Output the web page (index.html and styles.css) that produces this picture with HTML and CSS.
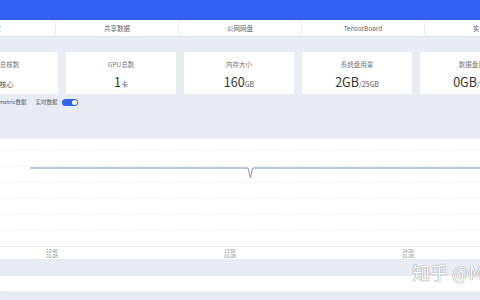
FILE: index.html
```html
<!DOCTYPE html>
<html lang="zh-CN">
<head>
  <meta charset="UTF-8">
  <title>监控</title>
  <link rel="stylesheet" href="styles.css">
</head>
<body>
  <div class="topbar"></div>
  <div class="tabs">
    <div class="tab">监控</div>
    <div class="tab">共享数据</div>
    <div class="tab">公网网盘</div>
    <div class="tab">TensorBoard</div>
    <div class="tab">实例日志</div>
  </div>
  <div class="main">
    <div class="cards">
      <div class="card">
        <div class="card__label">CPU总核数</div>
        <div class="card__value">4<small>核心</small></div>
      </div>
      <div class="card">
        <div class="card__label">GPU总数</div>
        <div class="card__value">1<small>卡</small></div>
      </div>
      <div class="card">
        <div class="card__label">内存大小</div>
        <div class="card__value">160<small>GB</small></div>
      </div>
      <div class="card">
        <div class="card__label">系统盘用量</div>
        <div class="card__value">2GB<small>/25GB</small></div>
      </div>
      <div class="card">
        <div class="card__label">数据盘用量</div>
        <div class="card__value">0GB<small>/50GB</small></div>
      </div>
    </div>
    <div class="switches">
      <span class="switches__item">显示metric数据</span>
      <span class="switches__item">实时数据</span>
      <span class="toggle"></span>
    </div>
    <div class="chart">
      <svg width="480" height="120" viewBox="0 0 480 120">
        <g stroke="#e4e6ea" stroke-width="1" stroke-dasharray="1 1.5">
          <line x1="0" y1="11.5" x2="480" y2="11.5" />
          <line x1="0" y1="27.5" x2="480" y2="27.5" />
          <line x1="0" y1="43.5" x2="480" y2="43.5" />
          <line x1="0" y1="59.5" x2="480" y2="59.5" />
          <line x1="0" y1="75.5" x2="480" y2="75.5" />
          <line x1="0" y1="91.5" x2="480" y2="91.5" />
        </g>
        <line x1="0" y1="107.5" x2="480" y2="107.5" stroke="#eceef2" />
        <polyline points="30,29 248,29 250.5,39 252.5,29 480,29" fill="none" stroke="#7f93c4" stroke-width="1" />
        <g class="chart__tick">
          <text x="52" y="114">13:40</text>
          <text x="52" y="119">01-08</text>
          <text x="230" y="114">13:50</text>
          <text x="230" y="119">01-08</text>
          <text x="408" y="114">14:00</text>
          <text x="408" y="119">01-08</text>
        </g>
      </svg>
    </div>
    <div class="band"></div>
    <div class="strip"></div>
  </div>
  <div class="watermark">知乎 @MLOps</div>
</body>
</html>
```

FILE: styles.css
```css
html, body {
  margin: 0;
  padding: 0;
  overflow: hidden;
}

body {
  width: 480px;
  height: 300px;
  background: #e9ebf5;
  font-family: "Noto Sans CJK SC", "Noto Sans", sans-serif;
  color: #444;
  position: relative;
}

.topbar {
  height: 20px;
  background: #3160f2;
}

.tabs {
  display: flex;
  height: 16px;
  margin-left: -67px;
  background: #fff;
  border-bottom: 1px solid #e3e5ea;
}

.tab {
  flex: 0 0 123px;
  border-right: 1px solid #eceef1;
  box-sizing: border-box;
  font-size: 6.5px;
  line-height: 16px;
  text-align: center;
  color: #666;
}

.main {
  display: flex;
  flex-direction: column;
}

.cards {
  display: flex;
  gap: 8px;
  margin-top: 15px;
  margin-left: -52px;
}

.card {
  flex: 0 0 110px;
  height: 42px;
  background: #fff;
  text-align: center;
}

.card__label {
  margin-top: 8px;
  font-size: 6.5px;
  line-height: 8px;
  color: #777;
}

.card__value {
  margin-top: 7px;
  font-size: 12.5px;
  line-height: 14px;
  color: #333;
}

.card__value small {
  font-size: 7px;
  color: #555;
}

.switches {
  display: flex;
  align-items: center;
  gap: 4px;
  height: 14px;
  margin-top: 1px;
  margin-left: -12px;
  font-size: 5.5px;
  color: #555;
}

.switches__item + .switches__item {
  margin-left: 5px;
}

.toggle {
  position: relative;
  width: 16px;
  height: 7px;
  border-radius: 4px;
  background: #2f62f0;
}

.toggle::after {
  content: "";
  position: absolute;
  right: 1px;
  top: 1px;
  width: 5px;
  height: 5px;
  border-radius: 50%;
  background: #fff;
}

.chart {
  margin-top: 30px;
  height: 120px;
  background: #fff;
}

.chart svg {
  display: block;
}

.chart__tick text {
  font-family: "Liberation Sans", sans-serif;
  font-size: 4.5px;
  fill: #888;
  text-anchor: middle;
}

.band {
  height: 17px;
}

.strip {
  height: 16px;
  background: #fff;
  border-bottom: 1px dotted #e4e6ea;
  box-sizing: border-box;
}

.watermark {
  position: absolute;
  left: 412px;
  top: 262px;
  font-size: 18px;
  line-height: 20px;
  white-space: nowrap;
  color: #fff;
  text-shadow: 0 0 1px #888, 0 0 1px #888;
}
```
